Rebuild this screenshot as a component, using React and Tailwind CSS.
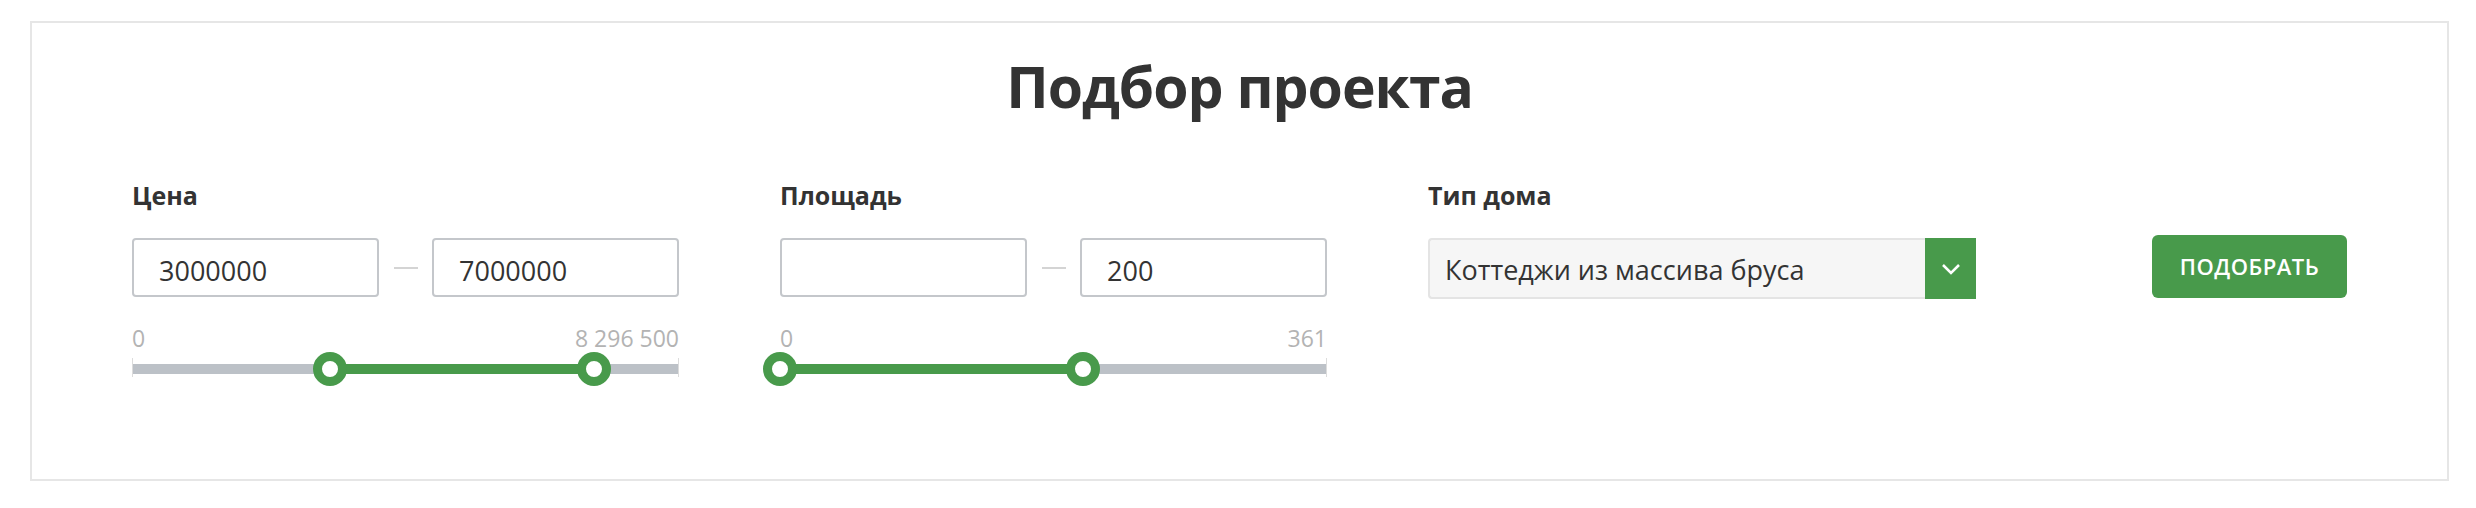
import React from 'react';

const GREEN = 'bg-[#489a4b]';

const RangeSlider = ({ min, max, from, to, maxLabel }) => {
  const left = ((from - min) / (max - min)) * 100;
  const right = ((to - min) / (max - min)) * 100;

  return (
    <div className="mt-[30px]">
      <div className="flex justify-between text-[23px] leading-none text-[#b3b3b3]">
        <span>{min}</span>
        <span>{maxLabel}</span>
      </div>
      <div className="relative h-[34px] mt-[2px]">
        {/* track */}
        <div className="absolute left-0 right-0 top-[12px] h-[10px] bg-[#bcc1c7]"></div>
        <div className="absolute left-0 top-[6px] h-[19px] w-px bg-[#dcdcdc]"></div>
        <div className="absolute right-0 top-[6px] h-[19px] w-px bg-[#dcdcdc]"></div>
        {/* selected range */}
        <div
          className={`absolute top-[12px] h-[10px] ${GREEN}`}
          style={{ left: `${left}%`, width: `${right - left}%` }}
        ></div>
        {/* handles */}
        <div
          className="absolute top-0 w-[34px] h-[34px] -ml-[17px] rounded-full border-[9px] border-[#489a4b] bg-white"
          style={{ left: `${left}%` }}
        ></div>
        <div
          className="absolute top-0 w-[34px] h-[34px] -ml-[17px] rounded-full border-[9px] border-[#489a4b] bg-white"
          style={{ left: `${right}%` }}
        ></div>
      </div>
    </div>
  );
};

const RangeInputs = ({ from, to }) => (
  <div className="flex items-center">
    <input
      readOnly
      defaultValue={from}
      className="w-[247px] h-[59px] border-2 border-[#c4c7cb] rounded-[4px] pl-[25px] pt-[5px] text-[27px] text-[#333] outline-none"
    />
    <div className="flex-1 flex justify-center">
      <div className="w-[24px] h-[2px] bg-[#d4d4d4]"></div>
    </div>
    <input
      readOnly
      defaultValue={to}
      className="w-[247px] h-[59px] border-2 border-[#c4c7cb] rounded-[4px] pl-[25px] pt-[5px] text-[27px] text-[#333] outline-none"
    />
  </div>
);

const FilterLabel = ({ children }) => (
  <div className="text-[25px] leading-none font-bold text-[#333] mb-[30px]">{children}</div>
);

export default function App() {
  return (
    <div
      className="w-[2476px] h-[508px] bg-white pt-[21px] pl-[30px]"
      style={{ fontFamily: '"Open Sans", "Noto Sans", sans-serif' }}
    >
      <div className="w-[2419px] h-[460px] border-2 border-[#e6e6e6]">
        <h1 className="pt-[35px] text-center text-[57px] leading-none font-bold tracking-[-1px] text-[#333]">
          Подбор проекта
        </h1>

        <div className="flex items-start px-[100px] mt-[68px]">
          {/* Цена */}
          <div className="w-[547px]">
            <FilterLabel>Цена</FilterLabel>
            <RangeInputs from="3000000" to="7000000" />
            <RangeSlider min={0} max={8296500} from={3000000} to={7000000} maxLabel="8 296 500" />
          </div>

          {/* Площадь */}
          <div className="w-[547px] ml-[101px]">
            <FilterLabel>Площадь</FilterLabel>
            <RangeInputs from="" to="200" />
            <RangeSlider min={0} max={361} from={0} to={200} maxLabel="361" />
          </div>

          {/* Тип дома */}
          <div className="w-[548px] ml-[101px]">
            <FilterLabel>Тип дома</FilterLabel>
            <div className="flex h-[61px]">
              <div className="flex-1 flex items-center pl-[15px] pt-[3px] bg-[#f6f6f6] border-2 border-r-0 border-[#e4e4e4] rounded-l-[4px] text-[27px] text-[#333]">
                Коттеджи из массива бруса
              </div>
              <div className={`w-[51px] flex items-center justify-center ${GREEN}`}>
                <svg width="20" height="12" viewBox="0 0 20 12" fill="none">
                  <path d="M2 2 L10 10 L18 2" stroke="white" strokeWidth="2.5" />
                </svg>
              </div>
            </div>
          </div>

          <button
            className={`ml-auto mt-[52px] w-[195px] h-[63px] rounded-[6px] ${GREEN} text-white text-[22px] font-semibold tracking-[0.5px]`}
          >
            ПОДОБРАТЬ
          </button>
        </div>
      </div>
    </div>
  );
}
